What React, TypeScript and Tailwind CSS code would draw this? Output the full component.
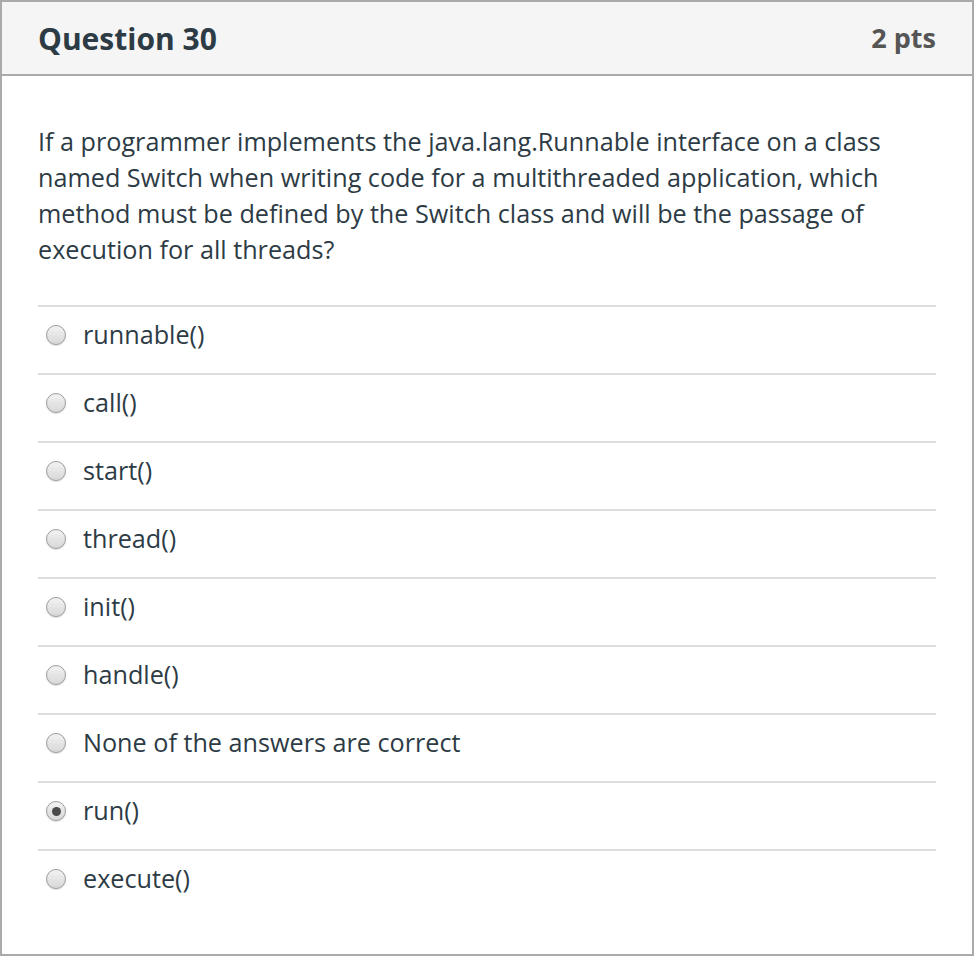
import React from "react";

const options = [
  "runnable()",
  "call()",
  "start()",
  "thread()",
  "init()",
  "handle()",
  "None of the answers are correct",
  "run()",
  "execute()",
];

function Radio({ checked }: { checked?: boolean }) {
  return (
    <span className="flex h-[20px] w-[20px] shrink-0 items-center justify-center rounded-full border border-[#9c9c9c] bg-gradient-to-b from-[#f2f2f2] to-[#d8d8d8] shadow-[0_1px_1px_rgba(0,0,0,0.15)]">
      {checked && <span className="block h-[9px] w-[9px] rounded-full bg-[#4a4a4a]" />}
    </span>
  );
}

export default function App() {
  return (
    <div className="h-[958px] w-[976px] bg-white" style={{ fontFamily: '"Open Sans", sans-serif' }}>
      <div className="h-[956px] w-[974px] border-2 border-[#aaaaaa] bg-white">
        <div className="flex h-[74px] items-center justify-between border-b-2 border-[#aaaaaa] bg-[#f5f5f5] px-[36px]">
          <h2 className="text-[30px] font-bold text-[#2d3b45]">Question 30</h2>
          <span className="text-[27px] font-bold text-[#555555]">2 pts</span>
        </div>
        <div className="px-[36px] pt-[47px]">
          <p className="pr-[10px] text-[25.2px] leading-[36px] text-[#2d3b45]">
            If a programmer implements the java.lang.Runnable interface on a class named Switch when writing code for a multithreaded application, which method must be defined by the Switch class and will be the passage of execution for all threads?
          </p>
          <div className="mt-[38px]">
            {options.map((o) => (
              <div key={o} className="flex h-[68px] items-center gap-[17px] border-t-2 border-[#dddddd] pb-[10px] pl-[8px]">
                <Radio checked={o === "run()"} />
                <span className="text-[25.2px] text-[#2d3b45]">{o}</span>
              </div>
            ))}
          </div>
        </div>
      </div>
    </div>
  );
}
